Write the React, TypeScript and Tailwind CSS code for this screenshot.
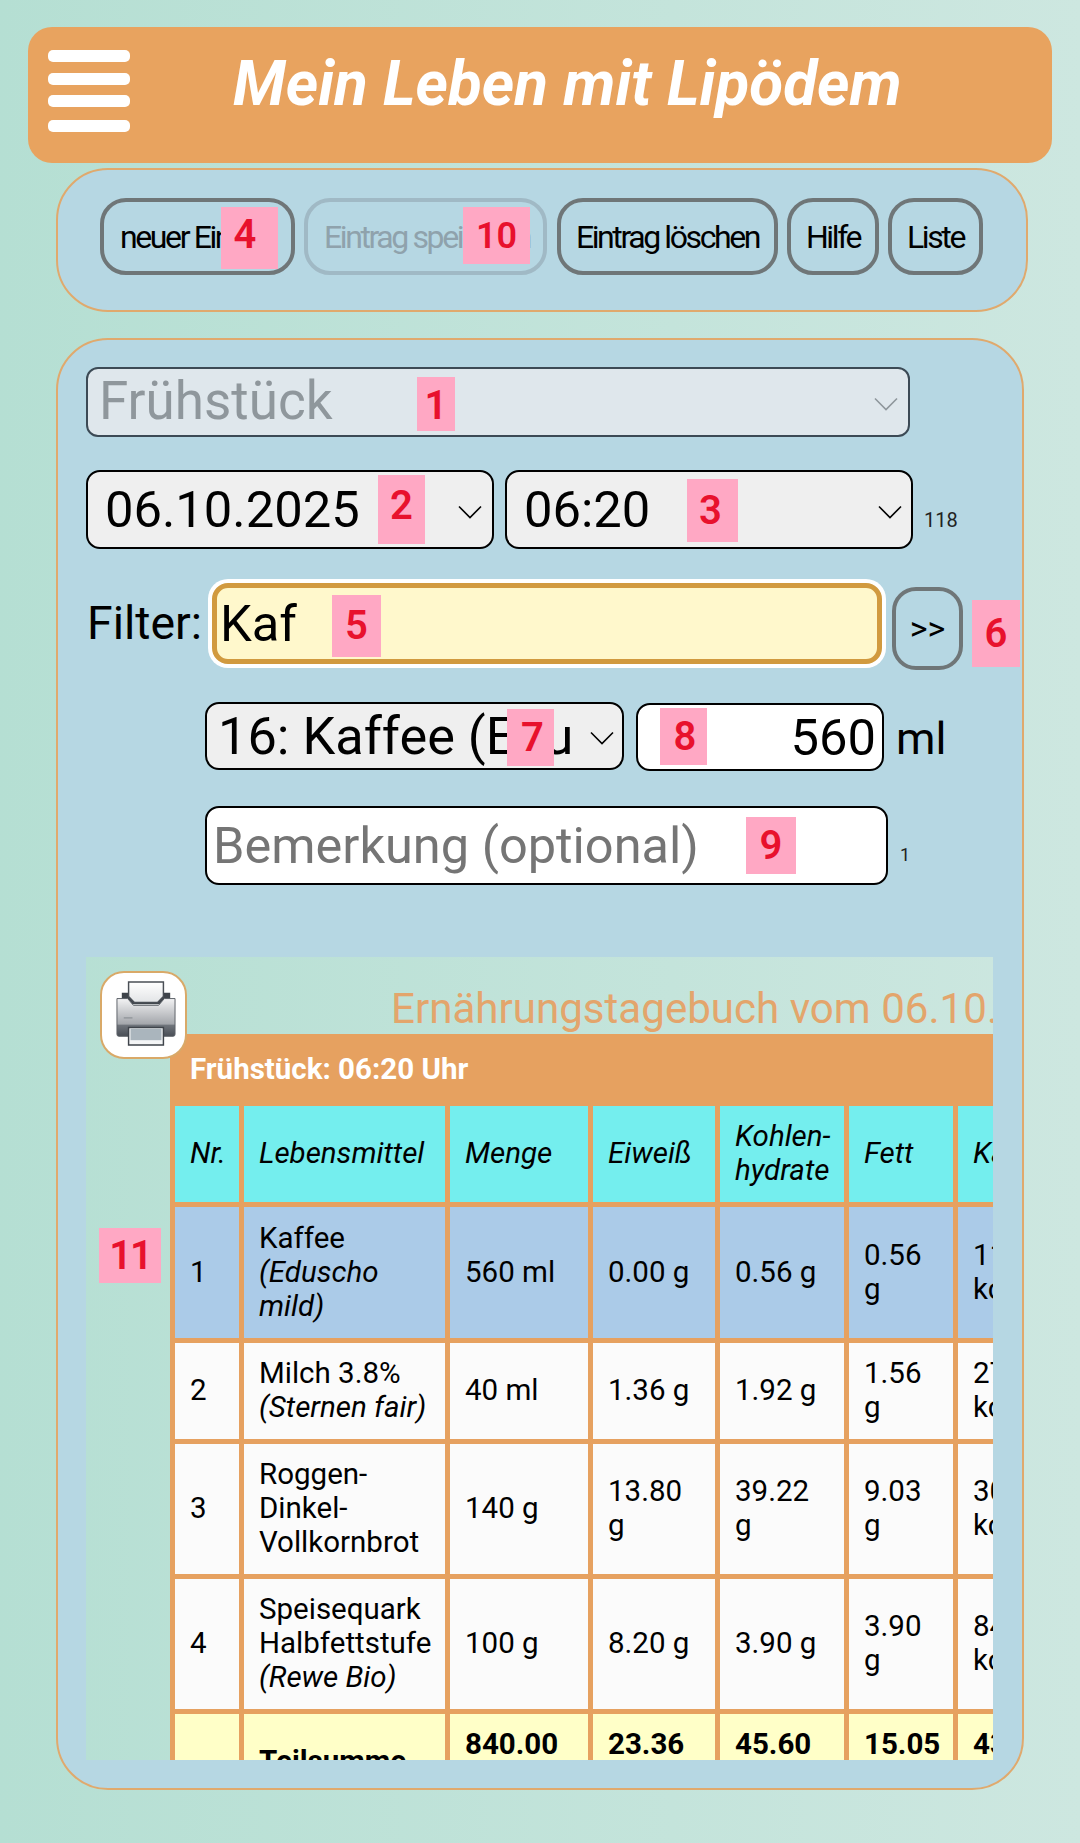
import { ReactNode } from "react";

const rows = [
  {
    nr: "1",
    name: "Kaffee",
    brand: "(Eduscho mild)",
    menge: "560 ml",
    eiweiss: "0.00 g",
    kohlen: "0.56 g",
    fett: "0.56 g",
    kcal: "11.20 kcal",
    bg: "bg-[#abcbe8]",
    h: "h-[131px]",
  },
  {
    nr: "2",
    name: "Milch 3.8%",
    brand: "(Sternen fair)",
    menge: "40 ml",
    eiweiss: "1.36 g",
    kohlen: "1.92 g",
    fett: "1.56 g",
    kcal: "27.20 kcal",
    bg: "bg-[#fbfbfb]",
    h: "h-[96px]",
  },
  {
    nr: "3",
    name: "Roggen-Dinkel-Vollkornbrot",
    brand: "",
    menge: "140 g",
    eiweiss: "13.80 g",
    kohlen: "39.22 g",
    fett: "9.03 g",
    kcal: "308.00 kcal",
    bg: "bg-[#fbfbfb]",
    h: "h-[130px]",
  },
  {
    nr: "4",
    name: "Speisequark Halbfettstufe",
    brand: "(Rewe Bio)",
    menge: "100 g",
    eiweiss: "8.20 g",
    kohlen: "3.90 g",
    fett: "3.90 g",
    kcal: "84.00 kcal",
    bg: "bg-[#fbfbfb]",
    h: "h-[130px]",
  },
];

function Badge({ className, children }: { className: string; children: ReactNode }) {
  return (
    <span
      className={`absolute flex items-center justify-center bg-[#ffa8c4] text-[#e8112d] text-[40px] font-semibold ${className}`}
    >
      {children}
    </span>
  );
}

function Chevron({ className }: { className: string }) {
  return (
    <svg
      className={`absolute pointer-events-none w-[24px] h-[14px] ${className}`}
      viewBox="0 0 24 14"
      fill="none"
      stroke="currentColor"
      strokeWidth="1.6"
    >
      <path d="M1 1.5 L12 12.5 L23 1.5" />
    </svg>
  );
}

function PrinterIcon() {
  return (
    <svg className="w-[60px] h-[70px]" viewBox="0 0 62 70">
      <defs>
        <linearGradient id="body" x1="0" y1="0" x2="0" y2="1">
          <stop offset="0" stopColor="#f3f3f4" />
          <stop offset="0.68" stopColor="#a3a6ab" />
          <stop offset="0.7" stopColor="#70757c" />
          <stop offset="1" stopColor="#484d55" />
        </linearGradient>
        <linearGradient id="paper" x1="0" y1="0" x2="0" y2="1">
          <stop offset="0" stopColor="#ffffff" />
          <stop offset="1" stopColor="#e2e4e6" />
        </linearGradient>
      </defs>
      <path d="M6 12 H56 V24 H6 Z" fill="#3f444b" />
      <path d="M13 1 H49 V16 L43 22 H19 L13 16 Z" fill="url(#paper)" stroke="#4a4f56" strokeWidth="1.5" />
      <path
        d="M1 18 H12 L18 25 H44 L50 18 H61 V55 Q61 57 59 57 H3 Q1 57 1 55 Z"
        fill="url(#body)"
        stroke="#5b6067"
        strokeWidth="1"
      />
      <path d="M8 38 H17" stroke="#8b8f94" strokeWidth="1.2" />
      <path d="M13 48 H49 V66 H13 Z" fill="#f4f5f6" stroke="#3f444b" strokeWidth="1.5" />
      <path d="M15 49 H47 V61 H15 Z" fill="#aab5bd" />
    </svg>
  );
}

export default function App() {
  const cell = "px-[15px] pt-[13px] pb-[15px] align-middle";
  return (
    <div className="w-[1080px] h-[1843px] overflow-hidden pt-[27px] bg-fixed bg-linear-to-r from-[#b5dfd3] to-[#cde7e0] font-['Roboto',sans-serif] text-black">
      <header className="ml-[28px] w-[1024px] h-[136px] rounded-[24px] bg-[#e8a35f] flex items-start">
        <div className="ml-[20px] mt-[23px] w-[82px]">
          <div className="h-[12px] rounded-[5px] bg-white" />
          <div className="h-[12px] rounded-[5px] bg-white mt-[11px]" />
          <div className="h-[12px] rounded-[5px] bg-white mt-[10px]" />
          <div className="h-[12px] rounded-[5px] bg-white mt-[13px]" />
        </div>
        <h1 className="ml-[103px] mt-[22px] text-[62px] leading-[70px] font-bold italic text-white whitespace-nowrap">
          Mein Leben mit Lipödem
        </h1>
      </header>

      <div className="ml-[56px] mt-[5px] w-[972px] h-[144px] rounded-[52px] border-2 border-[#e0a96d] bg-[#b6d7e3] pl-[42px] pt-[28px] flex gap-[9px]">
        <div className="relative">
          <button className="w-[195px] h-[77px] pl-[16px] text-left rounded-[26px] border-[4px] border-[#6f7678] text-[32px] tracking-[-2.4px] whitespace-nowrap overflow-hidden">
            neuer Eintrag
          </button>
          <Badge className="left-[121px] top-[9px] w-[57px] h-[62px] pr-[9px] pb-[6px]">4</Badge>
        </div>
        <div className="relative">
          <button className="w-[243px] h-[77px] pl-[16px] text-left rounded-[26px] border-[4px] border-[#a0b9c5] text-[#8fa2ac] text-[32px] tracking-[-2.4px] whitespace-nowrap overflow-hidden">
            Eintrag speichern
          </button>
          <Badge className="left-[159px] top-[9px] w-[67px] h-[57px]">
            <span className="text-[36px]">10</span>
          </Badge>
        </div>
        <button className="ml-[1px] w-[221px] h-[77px] rounded-[26px] border-[4px] border-[#6f7678] text-[32px] tracking-[-2.4px] whitespace-nowrap">
          Eintrag löschen
        </button>
        <button className="w-[92px] h-[77px] rounded-[26px] border-[4px] border-[#6f7678] text-[32px] tracking-[-2.4px]">
          Hilfe
        </button>
        <button className="w-[95px] h-[77px] rounded-[26px] border-[4px] border-[#6f7678] text-[32px] tracking-[-2.4px]">
          Liste
        </button>
      </div>

      <main className="ml-[56px] mt-[26px] w-[968px] h-[1452px] rounded-[52px] border-2 border-[#e0a96d] bg-[#b6d7e3] pl-[28px] pt-[27px]">
        <div className="relative w-[824px] h-[70px]">
          <div className="w-full h-full flex items-center rounded-[12px] border-2 border-[#3c4a55] bg-[#dfe7ec] pl-[11px] pb-[2px] text-[53px] leading-[56px] text-[#8f979c]">
            Frühstück
          </div>
          <Chevron className="left-[788px] top-[30px] text-[#8f979c]" />
          <Badge className="left-[331px] top-[10px] w-[38px] h-[54px] pt-[3px]">1</Badge>
        </div>

        <div className="mt-[33px] flex">
          <div className="relative w-[408px] h-[79px]">
            <select className="appearance-none w-full h-full rounded-[14px] border-2 border-black bg-[#efefef] pl-[17px] text-[50.7px]">
              <option>06.10.2025</option>
            </select>
            <Chevron className="left-[372px] top-[35px]" />
            <Badge className="left-[292px] top-[5px] w-[47px] h-[69px] pb-[7px]">2</Badge>
          </div>
          <div className="relative ml-[11px] w-[408px] h-[79px]">
            <select className="appearance-none w-full h-full rounded-[14px] border-2 border-black bg-[#efefef] pl-[17px] text-[50.7px]">
              <option>06:20</option>
            </select>
            <Chevron className="left-[373px] top-[35px]" />
            <Badge className="left-[182px] top-[9px] w-[51px] h-[63px] pr-[4px]">3</Badge>
          </div>
          <span className="ml-[11px] self-end mb-[16px] text-[20px] leading-[26px] text-[#222]">118</span>
        </div>

        <div className="mt-[34px] flex items-start">
          <label className="w-[126px] mt-[12px] pl-[1px] text-[46.4px] leading-[56px]">Filter:</label>
          <div className="relative w-[670px] h-[81px]">
            <input
              readOnly
              value="Kaf"
              className="w-full h-full rounded-[16px] border-[5px] border-[#d19a3f] bg-[#fff8cc] pl-[3px] text-[50.7px] shadow-[0_0_0_4px_#ffffff]"
            />
            <Badge className="left-[120px] top-[12px] w-[49px] h-[62px]">5</Badge>
          </div>
          <div className="relative ml-[10px] mt-[4px] w-[71px] h-[83px]">
            <button className="w-full h-full rounded-[24px] border-[4px] border-[#6f7678] text-[34px]">&gt;&gt;</button>
            <Badge className="left-[80px] top-[13px] w-[48px] h-[67px]">6</Badge>
          </div>
        </div>

        <div className="mt-[32px] ml-[119px] flex items-start">
          <div className="relative w-[419px] h-[68px]">
            <select className="appearance-none w-full h-full rounded-[14px] border-2 border-black bg-[#efefef] pl-[11px] pr-[48px] text-[52.3px] leading-[60px]">
              <option>16: Kaffee (Eduscho mild)</option>
            </select>
            <Chevron className="left-[385px] top-[29px]" />
            <Badge className="left-[302px] top-[7px] w-[47px] h-[57px] pl-[4px]">7</Badge>
          </div>
          <div className="relative ml-[12px] mt-[1px] w-[248px] h-[68px]">
            <input
              readOnly
              value="560"
              className="w-full h-full rounded-[14px] border-2 border-black bg-white pr-[6px] text-right text-[50.7px]"
            />
            <Badge className="left-[24px] top-[5px] w-[47px] h-[57px] pl-[3px]">8</Badge>
          </div>
          <span className="ml-[12px] mt-[7px] text-[45px] leading-[60px]">ml</span>
        </div>

        <div className="mt-[35px] ml-[119px] flex">
          <div className="relative w-[683px] h-[79px]">
            <input
              readOnly
              placeholder="Bemerkung (optional)"
              className="w-full h-full rounded-[14px] border-2 border-black bg-white pl-[6px] text-[50.5px] placeholder:text-[#757575]"
            />
            <Badge className="left-[541px] top-[11px] w-[50px] h-[57px]">9</Badge>
          </div>
          <span className="ml-[12px] self-end mb-[18px] text-[18px] leading-[24px] text-[#222]">1</span>
        </div>

        <section className="relative mt-[72px] w-[907px] h-[803px] overflow-hidden bg-fixed bg-linear-to-r from-[#b5dfd3] to-[#cde7e0]">
          <h2 className="ml-[305px] pt-[28px] h-[77px] text-[42.1px] leading-[47px] text-[#e3a56c] whitespace-nowrap">
            Ernährungstagebuch vom 06.10.2025
          </h2>
          <div className="ml-[84px] w-[1100px]">
            <table className="w-[911px] bg-[#e6a160] table-fixed border-separate border-spacing-[5px] text-[29.5px] leading-[34px]">
              <colgroup>
                <col className="w-[64px]" />
                <col className="w-[201px]" />
                <col className="w-[138px]" />
                <col className="w-[122px]" />
                <col className="w-[124px]" />
                <col className="w-[104px]" />
                <col className="w-[118px]" />
              </colgroup>
              <tbody>
                <tr>
                  <td colSpan={7} className="h-[62px] px-[15px] pb-[2px] text-left font-bold text-white align-middle">
                    Frühstück: 06:20 Uhr
                  </td>
                </tr>
                <tr className="h-[96px] bg-[#74eeee] italic">
                  <th className={`${cell} font-normal text-left`}>Nr.</th>
                  <th className={`${cell} font-normal text-left`}>Lebensmittel</th>
                  <th className={`${cell} font-normal text-left`}>Menge</th>
                  <th className={`${cell} font-normal text-left`}>Eiweiß</th>
                  <th className={`${cell} font-normal text-left`}>
                    Kohlen-
                    <br />
                    hydrate
                  </th>
                  <th className={`${cell} font-normal text-left`}>Fett</th>
                  <th className={`${cell} font-normal text-left`}>Kalorien</th>
                </tr>
                {rows.map((r) => (
                  <tr key={r.nr} className={`${r.h} ${r.bg}`}>
                    <td className={cell}>{r.nr}</td>
                    <td className={cell}>
                      {r.name} {r.brand && <i>{r.brand}</i>}
                    </td>
                    <td className={cell}>{r.menge}</td>
                    <td className={cell}>{r.eiweiss}</td>
                    <td className={cell}>{r.kohlen}</td>
                    <td className={cell}>{r.fett}</td>
                    <td className={cell}>{r.kcal}</td>
                  </tr>
                ))}
                <tr className="bg-[#ffffc8] font-bold">
                  <td className={cell}></td>
                  <td className={cell}>Teilsumme</td>
                  <td className={cell}>840.00 ml/g</td>
                  <td className={cell}>23.36 g</td>
                  <td className={cell}>45.60 g</td>
                  <td className={cell}>15.05 g</td>
                  <td className={cell}>431.20 kcal</td>
                </tr>
              </tbody>
            </table>
          </div>
          <button className="absolute left-[14px] top-[14px] w-[87px] h-[88px] rounded-[24px] border-2 border-[#d9a968] bg-white flex items-center justify-center pl-[4px]">
            <PrinterIcon />
          </button>
          <Badge className="left-[13px] top-[271px] w-[62px] h-[55px] tracking-[-2px]">11</Badge>
        </section>
      </main>
    </div>
  );
}
